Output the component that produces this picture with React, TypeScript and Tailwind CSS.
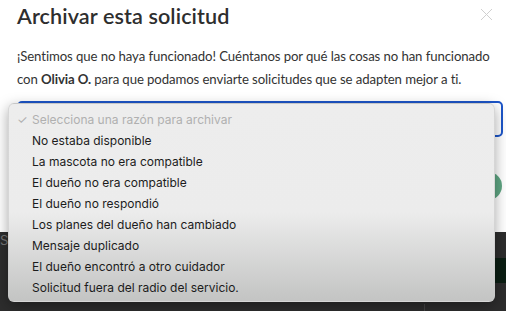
import { useState } from "react";

const razones = [
  "No estaba disponible",
  "La mascota no era compatible",
  "El dueño no era compatible",
  "El dueño no respondió",
  "Los planes del dueño han cambiado",
  "Mensaje duplicado",
  "El dueño encontró a otro cuidador",
  "Solicitud fuera del radio del servicio.",
];

export default function App() {
  const [seleccion] = useState<string | null>(null);

  return (
    <div className="relative w-[506px] h-[311px] overflow-hidden bg-white font-['Lato',sans-serif]">
      {/* Modal */}
      <div className="h-[232px] bg-white pl-[17px] pr-[3px] pt-[1px] relative">
        <div className="flex items-start justify-between pr-[10px]">
          <h1 className="text-[21.6px] leading-[30px] font-semibold text-[#2e2e2e] tracking-[0.1px]">
            Archivar esta solicitud
          </h1>
          <svg width="13" height="13" viewBox="0 0 13 13" className="mt-[7px]">
            <path d="M1 1 L12 12 M12 1 L1 12" stroke="#d0d0d0" strokeWidth="1" />
          </svg>
        </div>
        <p className="mt-[14px] text-[13.2px] leading-[23px] tracking-[-0.1px] text-[#333]">
          ¡Sentimos que no haya funcionado! Cuéntanos por qué las cosas no han funcionado con{" "}
          <span className="font-bold">Olivia O.</span> para que podamos enviarte solicitudes que se adapten mejor a ti.
        </p>
        <div className="mt-[10px] h-[36px] rounded-[5px] border-2 border-[#1d56c9] bg-white">
          {seleccion}
        </div>
        {/* boton verde detras */}
        <div className="absolute left-[474px] top-[172px] w-[28px] h-[28px] rounded-full bg-[#5fa683]" />
      </div>

      {/* Fondo oscuro */}
      <div className="h-[79px] bg-[#2d2d2d] relative">
        <span className="absolute left-0 top-[-1px] text-[13px] leading-[18px] text-[#777] font-['Inter',sans-serif]">S</span>
        <div className="absolute right-0 top-[26px] w-[12px] h-[25px] bg-[#0b1e13]" />
        <div className="absolute left-[424px] top-[72px] w-px h-[7px] bg-[#444]" />
      </div>

      {/* Menu desplegable */}
      <div className="absolute left-[8px] top-[103px] w-[487px] h-[199px] rounded-[6px] border border-[#c8c8c8]/60 bg-gradient-to-b from-[#ededed] via-[#ececec] via-55% to-[#c3c4c3] shadow-[0_4px_14px_rgba(0,0,0,0.35)] pt-[5px] font-['Inter',sans-serif] text-[12px]">
        <div className="flex items-center h-[21px] text-[#b0b0b0]">
          <span className="w-[23px] pl-[8px] text-[12px]">✓</span>
          <span>Selecciona una razón para archivar</span>
        </div>
        {razones.map((r) => (
          <div key={r} className="flex items-center h-[21px] text-[#1c1c1c]">
            <span className="w-[23px]" />
            <span>{r}</span>
          </div>
        ))}
      </div>
    </div>
  );
}
